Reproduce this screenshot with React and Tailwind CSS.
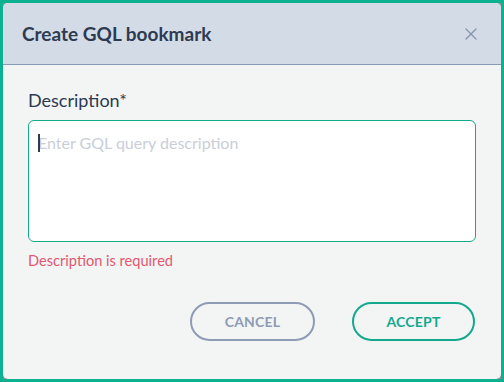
import { X } from 'lucide-react'

export default function App() {
  return (
    <div className="w-[504px] h-[382px] bg-[#0cb18f] p-[3px] font-['Lato','Noto_Sans',sans-serif]">
      <div className="h-full bg-[#8c8f93]">
        <div className="h-full flex flex-col rounded-[5px] overflow-hidden bg-[#f3f4f4]">
          {/* Header */}
          <div className="h-[62px] shrink-0 flex items-center justify-between pl-[19px] pr-[20px] bg-[#d3dbe6] border-b border-[#8a9bb7]">
            <h2 className="text-[19px] font-bold text-[#2d3a50] leading-none">Create GQL bookmark</h2>
            <X size={20} strokeWidth={1.6} className="text-[#8897ad]" />
          </div>

          {/* Body */}
          <div className="flex-1 flex flex-col px-[25px] pt-[24px]">
            <label className="text-[18px] text-[#2d3a50] leading-[22px]">Description*</label>
            <div className="relative mt-[9px]">
              <textarea
                autoFocus
                placeholder="Enter GQL query description"
                className="block h-[122px] w-full resize-none rounded-[6px] border border-[#12a98d] bg-white px-[9px] py-[12px] text-[16px] leading-5 text-[#2d3a50] caret-[#2d3a50] placeholder:text-[#c9ced9] outline-none"
              />
              {/* text caret */}
              <span className="absolute left-[10px] top-[14px] w-[2px] h-[18px] bg-[#2d3a50] pointer-events-none" />
            </div>
            <p className="mt-[9px] text-[14.6px] leading-5 text-[#e2586f]">Description is required</p>

            <div className="mt-[31px] flex justify-end gap-[37px] pr-[1px]">
              <button className="w-[125px] h-[39px] rounded-full border-2 border-[#8e9bb5] text-[14px] font-bold text-[#8e9bb5] tracking-[0.2px]">
                CANCEL
              </button>
              <button className="w-[123px] h-[39px] rounded-full border-2 border-[#12a98d] text-[14px] font-bold text-[#12a98d] tracking-[0.2px]">
                ACCEPT
              </button>
            </div>
          </div>
        </div>
      </div>
    </div>
  )
}
